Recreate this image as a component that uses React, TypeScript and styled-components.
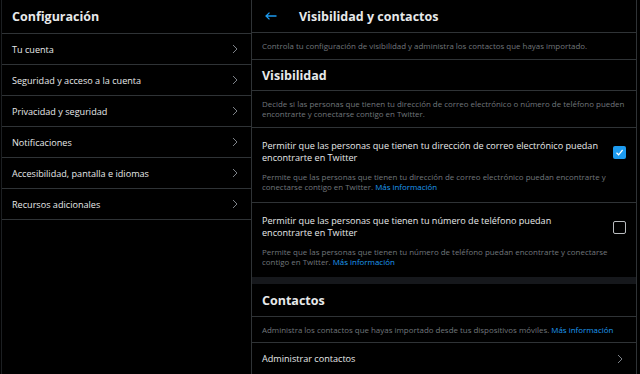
import React from 'react';
import styled, { createGlobalStyle } from 'styled-components';

const GlobalStyle = createGlobalStyle`
  html, body {
    margin: 0;
    padding: 0;
    background: #000;
  }
  body {
    font-family: "Open Sans", "Noto Sans", Arial, sans-serif;
    color: #e7e9ea;
  }
`;

const Page = styled.div`
  display: flex;
  width: 640px;
  height: 374px;
  padding-left: 1px;
  box-sizing: border-box;
  overflow: hidden;
  background: #000;
`;

const Sidebar = styled.aside`
  width: 251px;
  flex: none;
  box-sizing: border-box;
  border-left: 1px solid #1c1f22;
  border-right: 1px solid #2f3336;
`;

const Main = styled.main`
  width: 385px;
  flex: none;
  box-sizing: border-box;
  border-right: 1px solid #2f3336;
  display: flex;
  flex-direction: column;
`;

const Header = styled.header`
  height: 34px;
  box-sizing: border-box;
  border-bottom: 1px solid #2f3336;
  display: flex;
  align-items: center;
  padding: 0 10px;
  gap: 22px;
  font-size: 12.5px;
  font-weight: 700;
  color: #e7e9ea;
`;

const BackButton = styled.button`
  border: none;
  background: none;
  padding: 0 0 0 3px;
  display: flex;
  align-items: center;
  color: #1d9bf0;
  cursor: pointer;
`;

const MenuRow = styled.div`
  height: 31px;
  box-sizing: border-box;
  border-bottom: 1px solid #2f3336;
  display: flex;
  align-items: center;
  justify-content: space-between;
  padding: 0 13px 0 10px;
  font-size: 9.1px;
  color: #e7e9ea;
  cursor: pointer;
`;

const Chevron = () => (
  <svg width="6" height="10" viewBox="0 0 6 10" fill="none">
    <polyline points="1,1 5,5 1,9" stroke="#7d8288" strokeWidth="1" />
  </svg>
);

const Block = styled.div<{ $h: number }>`
  height: ${p => p.$h}px;
  box-sizing: border-box;
  border-bottom: 1px solid #2f3336;
  padding: 0 8px 0 10px;
  display: flex;
  flex-direction: column;
  justify-content: center;
  flex: none;
`;

const Note = styled.p`
  margin: 0;
  font-size: 7.93px;
  line-height: 10.3px;
  color: #71767b;

  a {
    color: #1d9bf0;
    text-decoration: none;
  }
`;

const SectionTitle = styled.h2`
  margin: 0;
  font-size: 12.5px;
  font-weight: 700;
  color: #e7e9ea;
`;

const Option = styled.div<{ $last?: boolean }>`
  height: ${p => (p.$last ? 74 : 75)}px;
  box-sizing: border-box;
  border-bottom: ${p => (p.$last ? 'none' : '1px solid #2f3336')};
  padding: 12px 10px 0;
  display: flex;
  flex-direction: column;
  gap: 8px;
  flex: none;
`;

const OptionHead = styled.label`
  display: flex;
  align-items: center;
  justify-content: space-between;
  gap: 10px;
  cursor: pointer;
`;

const OptionLabel = styled.span`
  width: 337px;
  font-size: 9.1px;
  line-height: 11.7px;
  color: #e7e9ea;
`;

const Box = styled.span<{ $on?: boolean }>`
  width: 13px;
  height: 13px;
  box-sizing: border-box;
  border-radius: 2px;
  border: ${p => (p.$on ? 'none' : '1.3px solid #b9bcbf')};
  background: ${p => (p.$on ? '#1d9bf0' : 'transparent')};
  display: flex;
  align-items: center;
  justify-content: center;
  flex: none;
`;

const Gap = styled.div`
  height: 7px;
  background: #16181c;
  flex: none;
`;

const ActionRow = styled(MenuRow)`
  border-bottom: none;
`;

const menu = [
  'Tu cuenta',
  'Seguridad y acceso a la cuenta',
  'Privacidad y seguridad',
  'Notificaciones',
  'Accesibilidad, pantalla e idiomas',
  'Recursos adicionales',
];

const Check = ({ on }: { on?: boolean }) => (
  <Box $on={on}>
    {on && (
      <svg width="9" height="9" viewBox="0 0 9 9" fill="none">
        <polyline points="1.5,4.8 3.6,6.8 7.6,2" stroke="#fff" strokeWidth="1.2" />
      </svg>
    )}
  </Box>
);

export default function App() {
  return (
    <>
      <GlobalStyle />
      <Page>
        <Sidebar>
          <Header>Configuración</Header>
          {menu.map(item => (
            <MenuRow key={item}>
              <span>{item}</span>
              <Chevron />
            </MenuRow>
          ))}
        </Sidebar>

        <Main>
          <Header>
            <BackButton aria-label="Atrás">
              <svg width="12" height="8" viewBox="0 0 12 8" fill="none">
                <path d="M11.5 4H1M4.5 0.6L1 4l3.5 3.4" stroke="currentColor" strokeWidth="1.3" />
              </svg>
            </BackButton>
            Visibilidad y contactos
          </Header>

          <Block $h={27}>
            <Note>Controla tu configuración de visibilidad y administra los contactos que hayas importado.</Note>
          </Block>
          <Block $h={31}>
            <SectionTitle>Visibilidad</SectionTitle>
          </Block>
          <Block $h={37}>
            <Note>
              Decide si las personas que tienen tu dirección de correo electrónico o número de teléfono pueden
              encontrarte y conectarse contigo en Twitter.
            </Note>
          </Block>

          <Option>
            <OptionHead>
              <OptionLabel>
                Permitir que las personas que tienen tu dirección de correo electrónico puedan encontrarte en Twitter
              </OptionLabel>
              <Check on />
            </OptionHead>
            <Note>
              Permite que las personas que tienen tu dirección de correo electrónico puedan encontrarte y conectarse
              contigo en Twitter. <a href="#">Más información</a>
            </Note>
          </Option>

          <Option $last>
            <OptionHead>
              <OptionLabel>
                Permitir que las personas que tienen tu número de teléfono puedan encontrarte en Twitter
              </OptionLabel>
              <Check />
            </OptionHead>
            <Note>
              Permite que las personas que tienen tu número de teléfono puedan encontrarte y conectarse contigo en
              Twitter. <a href="#">Más información</a>
            </Note>
          </Option>

          <Gap />

          <Block $h={33}>
            <SectionTitle>Contactos</SectionTitle>
          </Block>
          <Block $h={26}>
            <Note>
              Administra los contactos que hayas importado desde tus dispositivos móviles.{' '}
              <a href="#">Más información</a>
            </Note>
          </Block>
          <ActionRow>
            <span>Administrar contactos</span>
            <Chevron />
          </ActionRow>
        </Main>
      </Page>
    </>
  );
}
